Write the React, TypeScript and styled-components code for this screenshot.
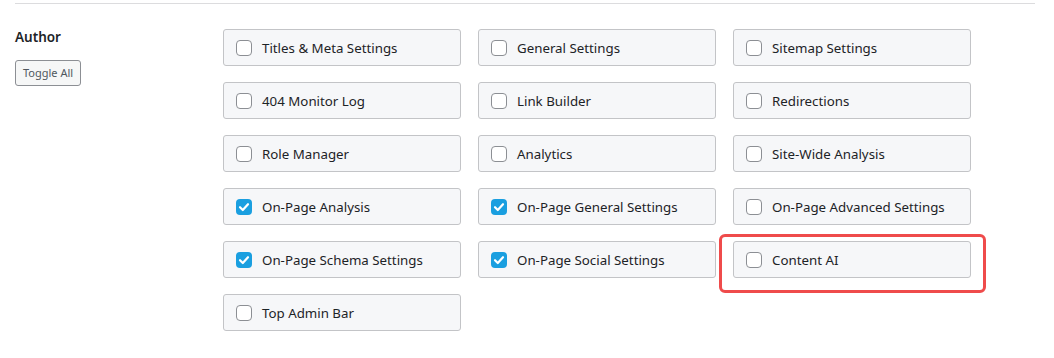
import React from "react";
import styled, { createGlobalStyle } from "styled-components";

const Global = createGlobalStyle`
  html, body { margin: 0; padding: 0; background: #fff; }
  body { font-family: "Noto Sans", "Open Sans", sans-serif; color: #1d2327; }
`;

const Page = styled.div`
  padding: 3px 19px 0 15px;
`;

const Divider = styled.hr`
  margin: 0;
  border: 0;
  border-top: 1px solid #dcdcde;
`;

const Section = styled.section`
  display: grid;
  grid-template-columns: 208px 1fr;
  padding-top: 25px;
`;

const Side = styled.div`
  display: flex;
  flex-direction: column;
  align-items: flex-start;
  gap: 14px;
  margin-top: -1px;
`;

const Label = styled.h3`
  margin: 0;
  font-size: 13.5px;
  font-weight: 600;
  line-height: 18px;
  color: #1d2327;
`;

const ToggleButton = styled.button`
  box-sizing: border-box;
  font-family: inherit;
  font-size: 11px;
  line-height: 22px;
  height: 26px;
  padding: 0 7px;
  border: 1px solid #8c8f94;
  border-radius: 3px;
  background: #f6f7f7;
  color: #50575e;
`;

const Grid = styled.div`
  display: grid;
  grid-template-columns: repeat(3, 238px);
  column-gap: 17px;
  row-gap: 16px;
`;

const Box = styled.label`
  position: relative;
  box-sizing: border-box;
  height: 37px;
  display: flex;
  align-items: center;
  gap: 10px;
  padding: 0 12px;
  border: 1px solid #c3c4c7;
  border-radius: 3px;
  background: #f6f7f9;
  font-size: 13.3px;
  color: #1d2327;
`;

const Check = styled.span<{ $on: boolean }>`
  box-sizing: border-box;
  width: 16px;
  height: 16px;
  flex: none;
  border-radius: 4px;
  border: ${(p) => (p.$on ? "none" : "1px solid #8c8f94")};
  background: ${(p) => (p.$on ? "#1a9fe0" : "#fff")};
  display: flex;
  align-items: center;
  justify-content: center;
`;

const Highlight = styled.span`
  position: absolute;
  top: -8px;
  left: -15px;
  right: -16px;
  bottom: -16px;
  border: 3px solid #ef4b4b;
  border-radius: 6px;
  pointer-events: none;
`;

const items: [string, boolean, boolean?][] = [
  ["Titles & Meta Settings", false],
  ["General Settings", false],
  ["Sitemap Settings", false],
  ["404 Monitor Log", false],
  ["Link Builder", false],
  ["Redirections", false],
  ["Role Manager", false],
  ["Analytics", false],
  ["Site-Wide Analysis", false],
  ["On-Page Analysis", true],
  ["On-Page General Settings", true],
  ["On-Page Advanced Settings", false],
  ["On-Page Schema Settings", true],
  ["On-Page Social Settings", true],
  ["Content AI", false, true],
  ["Top Admin Bar", false],
];

export default function App() {
  return (
    <>
      <Global />
      <Page>
        <Divider />
        <Section>
          <Side>
            <Label>Author</Label>
            <ToggleButton>Toggle All</ToggleButton>
          </Side>
          <Grid>
            {items.map(([name, on, hl]) => (
              <Box key={name}>
                <Check $on={on}>
                  {on && (
                    <svg width="12" height="12" viewBox="0 0 12 12">
                      <path d="M2 6.2 L4.8 9 L10 3.2" fill="none" stroke="#fff" strokeWidth="2.2" strokeLinecap="round" strokeLinejoin="round" />
                    </svg>
                  )}
                </Check>
                {name}
                {hl && <Highlight />}
              </Box>
            ))}
          </Grid>
        </Section>
      </Page>
    </>
  );
}
